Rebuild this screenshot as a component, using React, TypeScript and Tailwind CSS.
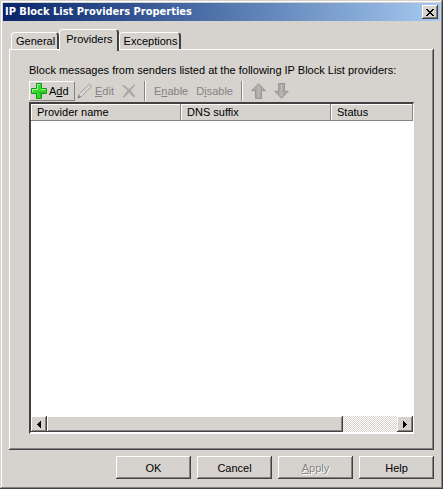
import type { ReactNode } from "react";

const raised =
  "bg-[#d6d3ce] shadow-[inset_-1px_-1px_0_#424142,inset_1px_1px_0_#ffffff,inset_-2px_-2px_0_#848284]";

function Key({ children }: { children: ReactNode }) {
  return <span className="underline underline-offset-1">{children}</span>;
}

function TitleBar() {
  return (
    <header className="flex h-[18px] items-center justify-between bg-linear-to-r from-[#0a246a] to-[#a6caf0] pr-0.5 pl-0.5">
      <h1 className="font-['DejaVu_Sans_Condensed','DejaVu_Sans',sans-serif] text-[11px] leading-4 font-bold whitespace-nowrap text-white">
        IP Block List Providers Properties
      </h1>
      <button type="button" aria-label="Close" className={`flex h-3.5 w-4 items-center justify-center ${raised}`}>
        <svg width="8" height="7" viewBox="0 0 8 7" fill="#000" shapeRendering="crispEdges">
          <path d="M0 0h2v1h1v1h2v-1h1v-1h2v1h-1v1h-1v1h-1v1h1v1h1v1h1v1h-2v-1h-1v-1h-2v1h-1v1h-2v-1h1v-1h1v-1h1v-1h-1v-1h-1v-1h-1z" />
        </svg>
      </button>
    </header>
  );
}

function Tab({ label, active = false }: { label: string; active?: boolean }) {
  const look = active ? "z-10 -mb-0.5 h-[22px] pr-1 pl-1.5 pb-1" : "h-[17px] pr-0.5 pl-1";
  return (
    <button
      type="button"
      role="tab"
      aria-selected={active}
      className={`relative flex items-center rounded-t-sm border-t border-r-2 border-l border-t-white border-r-[#424142] border-l-white bg-[#d6d3ce] ${look}`}
    >
      {label}
    </button>
  );
}

function ToolButton({ children, label }: { children: ReactNode; label?: string }) {
  return (
    <button type="button" disabled aria-label={label} className="flex h-5 items-center gap-0.5 text-[#848284]">
      {children}
    </button>
  );
}

function Separator() {
  return <div className="h-5 w-0.5 border-r border-l border-r-white border-l-[#848284]" />;
}

function PlusIcon() {
  return (
    <svg width="16" height="16" viewBox="0 0 16 16">
      <path d="M5.5 .5h5v5h5v5h-5v5h-5v-5h-5v-5h5z" fill="#35d72b" stroke="#139717" />
      <path d="M6.5 6.5v-5h2.5M1.5 9v-2.5h5M10 6.5h4.5" fill="none" stroke="#a5f59a" />
      <path d="M7 9.500h7M9.500 10v4.500" fill="none" stroke="#22be20" />
    </svg>
  );
}

function PencilIcon() {
  return (
    <svg width="16" height="16" viewBox="0 0 16 16" fill="none" stroke="#aaa8a5">
      <path d="M1 15l1.500-4.500L11 2c1.500-1.500 4 .5 2.700 2.300L5 13z" fill="#cfccc8" />
      <path d="M4 12l8-8M2.500 10.500L5 13" stroke="#e4e1dd" />
      <path d="M1 15l1-2.500 1.500 1.500z" fill="#8c8a88" stroke="#8c8a88" />
    </svg>
  );
}

function CrossIcon() {
  return (
    <svg width="14" height="14" viewBox="0 0 14 14" fill="#aaa8a6">
      <path d="M0 1.500L2 1l5 4.200L12.500 .3l1 .7L8.700 6.500l4.500 5.700-1.700 1.300L7 8.500 2.500 13.500.5 13l5-6.500z" />
    </svg>
  );
}

function ArrowIcon({ down = false }: { down?: boolean }) {
  return (
    <svg width="15" height="16" viewBox="0 0 15 16" className={down ? "rotate-180" : ""}>
      <path d="M7.500 .7l6.800 7H10.500v7.800h-6V7.700H.7z" fill="#aaa8a7" stroke="#999796" />
      <path d="M7.500 2.500v12" stroke="#bbb9b7" strokeWidth="2" />
    </svg>
  );
}

function ScrollArrow({ right = false }: { right?: boolean }) {
  return (
    <button
      type="button"
      aria-label={right ? "Scroll right" : "Scroll left"}
      className={`flex size-4 shrink-0 items-center justify-center ${raised}`}
    >
      <svg width="4" height="7" viewBox="0 0 4 7" shapeRendering="crispEdges" className={right ? "rotate-180" : ""}>
        <path d="M3 0h1v7h-1v-1h-1v-1h-1v-1h-1v-1h1v-1h1v-1h1z" />
      </svg>
    </button>
  );
}

function ProviderList() {
  const cell =
    "h-4 border-r border-b border-r-[#848284] border-b-[#848284] bg-[#d6d3ce] p-0 pl-1.5 text-left font-normal shadow-[inset_1px_1px_0_#ffffff]";
  return (
    <div className="flex flex-1 flex-col border-t-2 border-r border-b-2 border-l-2 border-t-[#424142] border-r-white border-b-white border-l-[#424142] bg-white">
      <div className="flex-1">
        <table className="w-full table-fixed border-separate border-spacing-0">
          <thead>
            <tr>
              <th className={`w-[150px] ${cell}`}>Provider name</th>
              <th className={`w-[150px] ${cell}`}>DNS suffix</th>
              <th className={cell}>Status</th>
            </tr>
          </thead>
          <tbody />
        </table>
      </div>
      <div className="flex h-4 bg-[#ebe9e6] bg-[repeating-conic-gradient(#ffffff_0_25%,#d6d3ce_0_50%)] bg-size-[2px_2px]">
        <ScrollArrow />
        <div className="flex flex-1">
          <div className={`w-[84.5%] ${raised}`} />
        </div>
        <ScrollArrow right />
      </div>
    </div>
  );
}

function DialogButton({ children, disabled = false }: { children: ReactNode; disabled?: boolean }) {
  return (
    <button
      type="button"
      disabled={disabled}
      className={`h-[23px] w-[75px] ${raised} ${disabled ? "text-[#848284] [text-shadow:1px_1px_0_#ffffff]" : ""}`}
    >
      {children}
    </button>
  );
}

export default function App() {
  return (
    <main className="flex min-h-screen w-full flex-col bg-[#d6d3ce] p-[3px] font-['Liberation_Sans',Arial,sans-serif] text-[11px] leading-4 text-black shadow-[inset_-1px_-1px_0_#424142,inset_1px_1px_0_#d6d3ce,inset_-2px_-2px_0_#848284,inset_2px_2px_0_#ffffff]">
      <TitleBar />
      <div className="flex flex-1 flex-col px-1.5 pt-2 pb-[7px]">
        <div role="tablist" className="flex items-end pl-0.5">
          <Tab label="General" />
          <Tab label="Providers" active />
          <Tab label="Exceptions" />
        </div>
        <section
          role="tabpanel"
          className="flex flex-1 flex-col pt-[13px] pr-5 pb-4 pl-5 shadow-[inset_-1px_-1px_0_#424142,inset_1px_1px_0_#ffffff,inset_-2px_-2px_0_#848284]"
        >
          <p className="whitespace-nowrap">Block messages from senders listed at the following IP Block List providers:</p>
          <div role="toolbar" className="flex h-6 items-center gap-2 pt-px">
            <div className="flex items-center gap-0.5">
              <button
                type="button"
                className="flex h-5 w-[46px] items-center gap-0.5 border border-t-white border-r-[#848284] border-b-[#848284] border-l-white pl-px"
              >
                <PlusIcon />
                <span>
                  A<Key>d</Key>d
                </span>
              </button>
              <ToolButton>
                <PencilIcon />
                <span>
                  <Key>E</Key>dit
                </span>
              </ToolButton>
            </div>
            <ToolButton label="Delete">
              <CrossIcon />
            </ToolButton>
            <Separator />
            <ToolButton>
              <span>
                E<Key>n</Key>able
              </span>
            </ToolButton>
            <ToolButton>
              <span>
                D<Key>i</Key>sable
              </span>
            </ToolButton>
            <Separator />
            <ToolButton label="Move up">
              <ArrowIcon />
            </ToolButton>
            <ToolButton label="Move down">
              <ArrowIcon down />
            </ToolButton>
          </div>
          <ProviderList />
        </section>
        <footer className="flex justify-end gap-1.5 pt-1.5">
          <DialogButton>OK</DialogButton>
          <DialogButton>Cancel</DialogButton>
          <DialogButton disabled>
            <Key>A</Key>pply
          </DialogButton>
          <DialogButton>Help</DialogButton>
        </footer>
      </div>
    </main>
  );
}
